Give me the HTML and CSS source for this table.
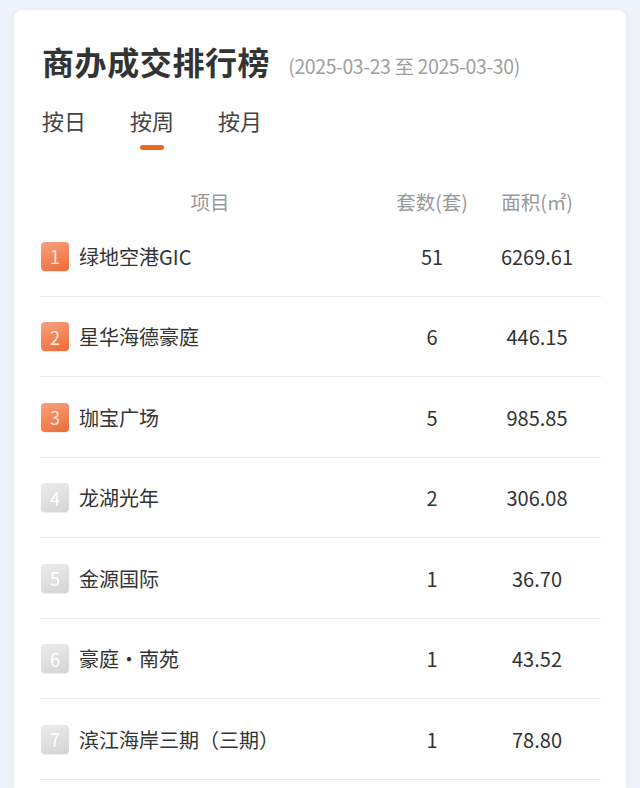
FILE: index.html
```html
<!DOCTYPE html>
<html lang="zh-CN">
<head>
<meta charset="utf-8">
<link rel="stylesheet" href="styles.css">
</head>
<body>
<div class="card">
  <div class="title-row">
    <h1 class="title">商办成交排行榜</h1>
    <span class="date">(2025-03-23 至 2025-03-30)</span>
  </div>
  <div class="tabs">
    <div class="tab">按日</div>
    <div class="tab active">按周</div>
    <div class="tab">按月</div>
  </div>
  <div class="table">
    <div class="thead">
      <div class="c-name">项目</div>
      <div class="c-num">套数(套)</div>
      <div class="c-area">面积(㎡)</div>
    </div>
    <div class="row">
      <div class="c-name"><span class="badge hot">1</span><span class="name">绿地空港GIC</span></div>
      <div class="c-num">51</div>
      <div class="c-area">6269.61</div>
    </div>
    <div class="row">
      <div class="c-name"><span class="badge hot">2</span><span class="name">星华海德豪庭</span></div>
      <div class="c-num">6</div>
      <div class="c-area">446.15</div>
    </div>
    <div class="row">
      <div class="c-name"><span class="badge hot">3</span><span class="name">珈宝广场</span></div>
      <div class="c-num">5</div>
      <div class="c-area">985.85</div>
    </div>
    <div class="row">
      <div class="c-name"><span class="badge">4</span><span class="name">龙湖光年</span></div>
      <div class="c-num">2</div>
      <div class="c-area">306.08</div>
    </div>
    <div class="row">
      <div class="c-name"><span class="badge">5</span><span class="name">金源国际</span></div>
      <div class="c-num">1</div>
      <div class="c-area">36.70</div>
    </div>
    <div class="row">
      <div class="c-name"><span class="badge">6</span><span class="name">豪庭・南苑</span></div>
      <div class="c-num">1</div>
      <div class="c-area">43.52</div>
    </div>
    <div class="row">
      <div class="c-name"><span class="badge">7</span><span class="name">滨江海岸三期（三期）</span></div>
      <div class="c-num">1</div>
      <div class="c-area">78.80</div>
    </div>
  </div>
</div>
</body>
</html>
```

FILE: styles.css
```css
html, body {
  margin: 0;
  padding: 0;
}
body {
  background: #eef2fa;
  font-family: "Noto Sans CJK SC", "Noto Sans", sans-serif;
  color: #333;
  overflow: hidden;
  height: 788px;
}
.card {
  margin: 10px 14px 0;
  background: #fff;
  border-radius: 8px 8px 0 0;
  box-shadow: 0 0 4px rgba(120, 140, 180, 0.12);
  padding: 29px 25px 8px 26px;
}
.title-row {
  display: flex;
  align-items: baseline;
  padding-left: 2px;
}
.title {
  margin: 0;
  font-size: 32px;
  line-height: 44px;
  font-weight: 700;
  color: #333;
  letter-spacing: 0.6px;
}
.date {
  margin-left: 18px;
  font-size: 19.5px;
  color: #a0a0a0;
  letter-spacing: -0.4px;
  position: relative;
  top: -1px;
}
.tabs {
  display: flex;
  gap: 44px;
  margin-top: 22px;
  padding-left: 2px;
}
.tab {
  font-size: 22px;
  line-height: 30px;
  color: #444;
  padding-bottom: 15px;
  position: relative;
}
.tab.active::after {
  content: "";
  position: absolute;
  left: 50%;
  bottom: 0;
  width: 24px;
  height: 5px;
  margin-left: -12px;
  border-radius: 3px;
  background: #ee6a1f;
}
.table {
  margin-top: 38px;
}
.thead, .row {
  display: flex;
  align-items: center;
}
.thead {
  font-size: 19.5px;
  line-height: 28px;
  color: #999;
}
.thead .c-name {
  justify-content: center;
}
.row {
  border-bottom: 1px solid #ebebeb;
  font-size: 20px;
  color: #333;
  padding-top: 1px;
  box-sizing: border-box;
  height: 80.5px;
}
.c-name {
  width: 340px;
  display: flex;
  align-items: center;
}
.c-num {
  width: 104px;
  text-align: center;
}
.c-area {
  width: 106px;
  text-align: center;
}
.badge {
  width: 28px;
  height: 29px;
  border-radius: 4px;
  display: inline-flex;
  align-items: center;
  justify-content: center;
  font-size: 18px;
  color: #fff;
  margin-left: 1px;
  margin-right: 10px;
  background: linear-gradient(160deg, #ececec 0%, #d4d4d4 100%);
  box-shadow: 0 1px 1px rgba(0, 0, 0, 0.08);
}
.badge.hot {
  background: linear-gradient(160deg, #f8a27c 0%, #ee6a38 100%);
  color: #fde8dc;
}
.name {
  white-space: nowrap;
}
```
